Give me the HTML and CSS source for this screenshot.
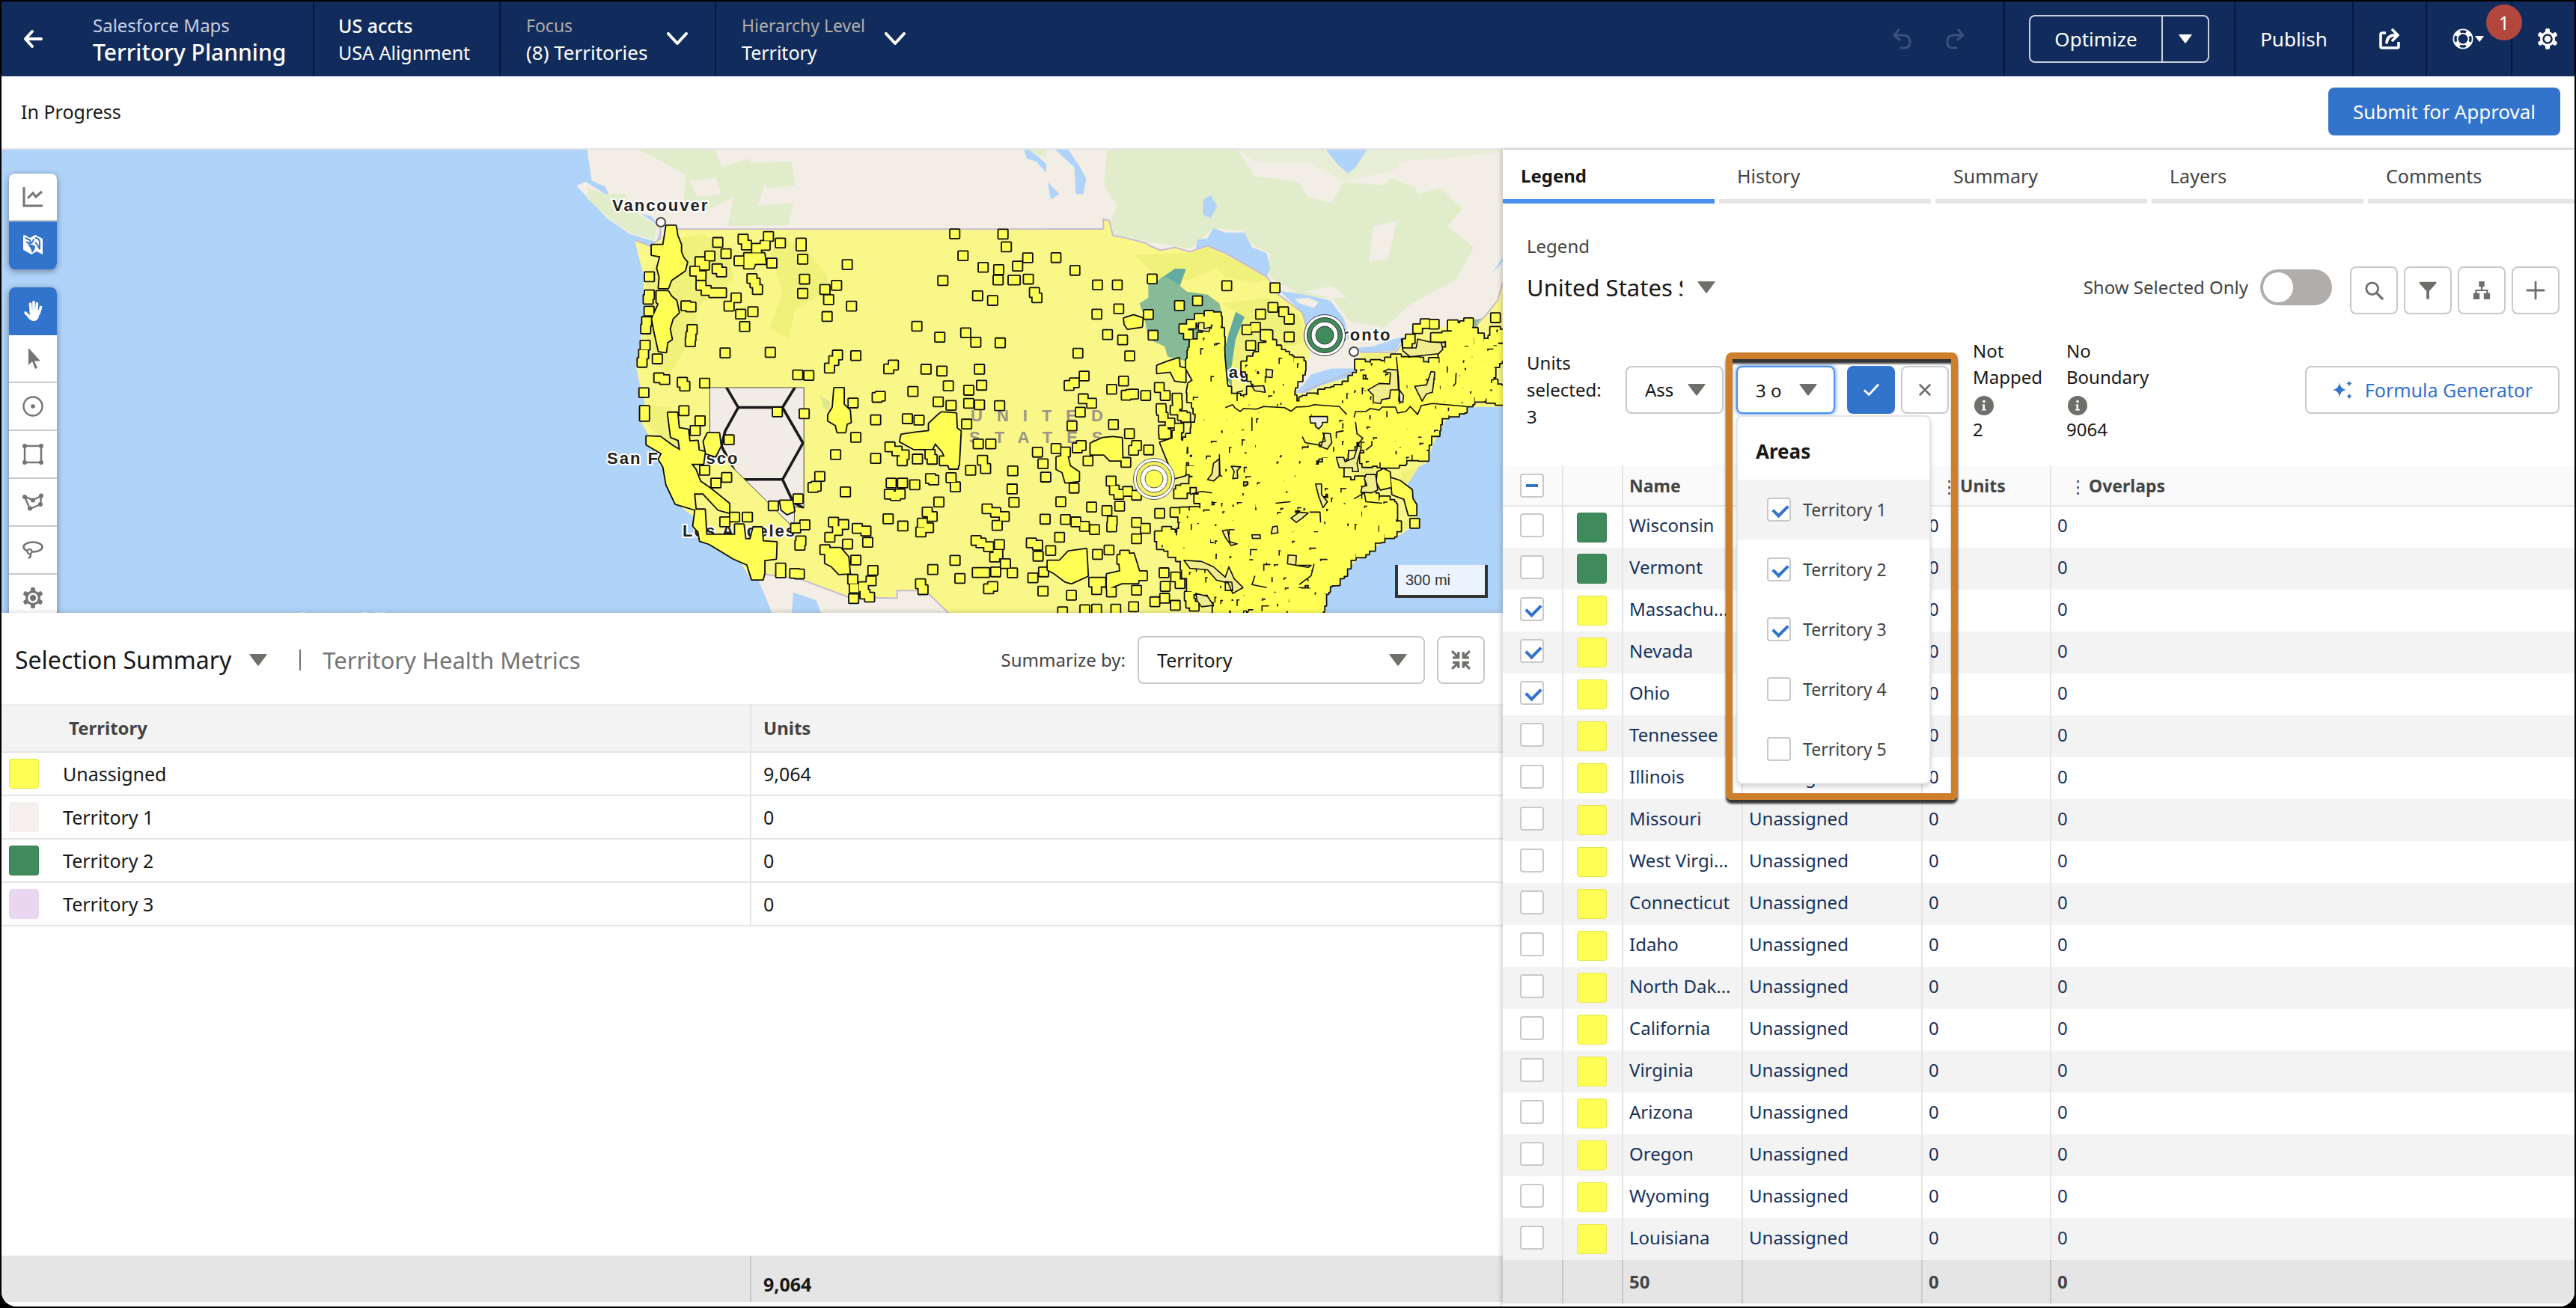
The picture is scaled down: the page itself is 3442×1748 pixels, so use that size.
FILE: index.html
```html
<!DOCTYPE html>
<html lang="en">
<head>
<meta charset="utf-8">
<title>Territory Planning</title>
<link rel="stylesheet" href="styles.css">
</head>
<body>
<svg class="sprite" aria-hidden="true">
  <symbol id="caret" viewBox="0 0 24 16"><path d="M1 0h22q1 0 .5 1L13 15q-1 1-2 0L.5 1Q0 0 1 0z" fill="currentColor"/></symbol>
  <symbol id="chevron" viewBox="0 0 28 18"><path d="M2 2l12 13L26 2" fill="none" stroke="currentColor" stroke-width="4" stroke-linecap="round" stroke-linejoin="round"/></symbol>
  <symbol id="gear" viewBox="0 0 28 28">
    <g fill="currentColor"><rect x="11" y="0" width="6" height="28" rx="2"/><rect x="11" y="0" width="6" height="28" rx="2" transform="rotate(60 14 14)"/><rect x="11" y="0" width="6" height="28" rx="2" transform="rotate(120 14 14)"/><circle cx="14" cy="14" r="10"/></g>
    <circle cx="14" cy="14" r="5.5" fill="none" stroke="var(--hole)" stroke-width="2.6"/>
  </symbol>
  <symbol id="undo" viewBox="0 0 28 28"><path d="M9 2L3 9l7 6M4 9h11q9 0 9 9t-8 8h-4" fill="none" stroke="currentColor" stroke-width="3" stroke-linecap="round" stroke-linejoin="round"/></symbol>
  <symbol id="info" viewBox="0 0 26 26"><circle cx="13" cy="13" r="13" fill="currentColor"/><circle cx="13" cy="7.5" r="1.8" fill="#fff"/><path d="M10.500 11.500h3.500v6.500h2v1.500h-6v-1.500h1.500v-5h-1z" fill="#fff"/></symbol>
</svg>
<div class="app">
  <header class="topbar">
    <button class="cell back" aria-label="Back"><svg viewBox="0 0 28 28"><path d="M13 4L4 14l9 10M4 14h21" fill="none" stroke="currentColor" stroke-width="4" stroke-linecap="round" stroke-linejoin="round"/></svg></button>
    <div class="cell brand"><span class="soft">Salesforce Maps</span><h1>Territory Planning</h1></div>
    <div class="cell align"><strong>US accts</strong><span>USA Alignment</span></div>
    <button class="cell pick focus"><span class="lines"><span class="dim">Focus</span><span>(8) Territories</span></span><svg><use href="#chevron"/></svg></button>
    <button class="cell pick level"><span class="lines"><span class="dim">Hierarchy Level</span><span>Territory</span></span><svg><use href="#chevron"/></svg></button>
    <div class="cell history"><button aria-label="Undo" disabled><svg><use href="#undo"/></svg></button><button class="redo" aria-label="Redo" disabled><svg><use href="#undo"/></svg></button></div>
    <div class="cell optimize"><button class="opt-main">Optimize</button><button class="opt-more" aria-label="More optimize actions"><svg><use href="#caret"/></svg></button></div>
    <button class="cell publish">Publish</button>
    <button class="cell share" aria-label="Share"><svg viewBox="0 0 28 28"><path d="M9 6H4q-2 0-2 2v16q0 2 2 2h20q2 0 2-2v-6" fill="none" stroke="currentColor" stroke-width="3.600"/><path d="M18 2l7 7-7 7M24 9q-13-1-14 10" fill="none" stroke="currentColor" stroke-width="3.600" stroke-linecap="round" stroke-linejoin="round"/></svg></button>
    <button class="cell help" aria-label="Help"><svg class="ring" viewBox="0 0 28 28"><circle cx="14" cy="14" r="10" fill="none" stroke="currentColor" stroke-width="7"/><circle cx="14" cy="14" r="10" fill="none" stroke="#112c5c" stroke-width="3.400" stroke-dasharray="7.900 7.800" stroke-dashoffset="4"/></svg><svg class="tiny"><use href="#caret"/></svg><span class="badge">1</span></button>
    <button class="cell settings" aria-label="Settings"><svg><use href="#gear"/></svg></button>
  </header>
  <div class="statusbar"><span>In Progress</span><button class="primary">Submit for Approval</button></div>
  <main class="work">
    <section class="left">
      <div class="map">
        <svg class="geo" viewBox="2 200 2006 619" preserveAspectRatio="xMinYMin slice" aria-label="Map of the United States">
          <g transform="translate(760 200) scale(.408 .396)">
            <path class="land" d="M60 0L75 105 120 125 130 150 200 205 270 225 300 265 300 320 265 325 218 305 225 345 245 420 245 560 235 640 220 730 235 800 248 850 240 925 270 980 320 1100 350 1190 410 1240 460 1330 560 1385 590 1440 620 1450 668 1570 730 1570 735 1495 810 1520 828 1570 1575 1570 1575 0z"/>
            <path class="land" d="M25 122L55 108 120 150 185 150 215 200 300 262 288 312 200 285 125 232z"/>
            <path class="wood" d="M60 130L120 150 185 150 210 205 290 260 280 305 200 280 130 230 60 165zM230 0H480L500 60 590 30 640 120 620 190 735 180 720 255 520 258 540 160 450 205 375 165 385 85zM590 45L730 40 740 120 650 130z"/>
            <path class="land" d="M395 105L480 95 500 150 420 160z"/>
            <path class="wood" d="M1490 0H1575V30z"/>
            <path class="water" d="M1490 0L1500 30 1530 40 1575 90V60L1545 30 1505 0zM35 0L50 60 42 25 30 0z"/>
            <path class="usa" d="M335 268H1575V1570H1250L1180 1500 1160 1488H1075V1514L915 1510 760 1450 635 1432 590 1440 560 1385 460 1330 410 1240 350 1190 320 1100 270 980 240 925 248 850 235 800 220 730 235 640 245 560 245 420 225 345 218 305 265 325 300 300z"/>
            <path class="usa-green" d="M360 300L440 285 520 340 540 440 430 520 400 640 330 760 250 700 260 560 250 420zM690 290L780 340 850 430 840 480 740 540 720 640 660 600 700 480 660 360zM250 860L330 870 380 960 470 1040 440 1060 330 1010 260 930z"/>
            <path class="usa-edge" d="M345 268H1575M218 305L265 325 300 300 300 265M635 1432L760 1450 915 1510 1075 1514V1488H1160L1180 1500 1250 1570"/>
            <clipPath id="nv"><path d="M462 803H770V1210L740 1205 738 1262 725 1265 500 1035 462 1000z"/></clipPath>
            <path d="M462 803H770V1210L740 1205 738 1262 725 1265 500 1035 462 1000z" fill="#f1ede6" stroke="#222" stroke-width="2"/>
            <path clip-path="url(#nv)" d="M515 800L555 870H700L742 800M555 870L512 950 500 1000 545 1090 570 1113H700L767 990 700 870M700 1113L735 1190 770 1210" fill="none" stroke="#1a1a1a" stroke-width="9"/>
            <path d="M822 830L855 850 855 880 835 870z" fill="#dfe68c"/>
          </g>
          <g transform="translate(1400 200) scale(.3954)">
            <path class="land" d="M-5 0H1540V870H1418L1340 920 1300 1000 1280 1060 1255 1070 1190 1170 1230 1200 1250 1260 1195 1300 1140 1320 1030 1400 940 1500V1570H-5z"/>
            <path class="wood" d="M200 0H640L700 90 850 110 880 160 960 180 1000 110 1130 120 1220 60 1250 150 1330 130 1400 200 1350 260 1440 330 1380 440 1230 520 1140 600 1020 580 960 500 870 500 750 430 750 350 690 320 660 275 560 265 480 335 400 320 330 310 220 285 215 235 235 190 190 120z"/>
            <path class="wood" d="M640 0H1540L1400 60 1200 60 1000 110 880 40 700 40z" opacity=".6"/>
            <path class="land" d="M1100 260L1180 240 1150 370 1085 380zM1190 40L1540 10V180L1400 110 1250 130 1170 100zM1390 265L1510 260 1500 310 1400 300zM870 480L960 460 1010 500 950 500z"/>
            <path class="water" d="M25 0H70L110 60 130 100 120 150H95L90 60zM0 110L40 150 10 168zM525 170L550 155 572 190 550 232 525 220zM940 0H1078L1040 60 1015 80 980 50zM1500 420L1540 360V375z"/>
            <path class="usa" d="M-5 268H188V235L208 240 220 290 270 300 330 315 380 340 430 330 480 345 540 325 600 350 680 395 740 430 780 490 860 550 880 620 885 700 850 770 830 820 940 790 1040 740 1055 685 1175 680 1250 600 1440 600 1480 560 1520 510 1537 450V870H1418L1340 920 1300 1000 1280 1060 1255 1070 1190 1170 1230 1200 1250 1260 1195 1300 1140 1320 1030 1400 940 1500V1570H-5z"/>
            <path class="usa-green" d="M290 355L480 350 540 330 690 400 740 440 700 450 600 430 570 400 480 440 380 440zM590 520L740 500 850 560 870 650 700 700 620 780 625 650 665 565zM1060 1020L1120 1000 1110 1170 1040 1180zM1195 1090L1250 1075 1190 1170zM1060 690H1180V720H1060zM1240 1200L1250 1260 1200 1280z"/>
            <path d="M375 440L430 402 467 403 447 460z" fill="#64ab9f"/>
            <path d="M340 455L400 430 447 460 470 480 540 490 580 520 590 560 500 640 470 715 405 700 395 665 340 640 325 560 310 520 340 500z" fill="#87bb98"/>
            <path d="M635 548L665 565 635 640 620 740 622 800 600 770 592 700 612 620z" fill="#64ab9f"/>
            <path d="M1440 575L1468 570 1445 605z" fill="#87bb98"/>
            <path class="water" d="M500 335L505 305 540 300 560 265 600 280 665 280 690 330 740 350 752 400 740 430 680 395 600 350 540 325zM785 478L870 490 955 510 1000 570 1020 640 900 650 880 620 860 550zM835 822L860 800 890 760 960 740 1040 740 1035 765 930 795 870 822zM1015 672L1100 665 1170 640 1205 632 1175 680 1060 685z"/>
            <path class="land" d="M835 505L880 500 915 515 900 535 850 520z"/>
            <path class="usa-edge" d="M-5 268H188V235L208 240 220 290 270 300 330 315 345 325 380 340 430 330 480 345 540 325 600 350 680 395 740 430 780 490 860 550 880 620M855 822L940 785 1035 750M1055 685H1175L1210 640M1450 590L1480 560 1520 510 1537 450"/>
          </g>
          <g class="city">
            <text x="818" y="282">Vancouver</text>
            <text x="811" y="620">San Francisco</text>
            <text x="912" y="717">Los Angeles</text>
            <text x="1586" y="505">Chicago</text>
            <text x="1764" y="455">Toronto</text>
          </g>
          <g class="country"><text x="1297" y="563">UNITED</text><text x="1295" y="592">STATES</text></g>
          <text class="sea" x="336" y="836">North Pacific</text>
          <g id="units"></g>
          <g fill="#fff" stroke="#444" stroke-width="2"><circle cx="883" cy="297" r="6"/><circle cx="1809" cy="470" r="6"/></g>
          <g stroke="#333" stroke-width="1"><circle cx="1770" cy="448" r="27.500" fill="#fff"/><circle cx="1770" cy="448" r="23.500" fill="#3f8b5c"/><circle cx="1770" cy="448" r="18" fill="#fff"/><circle cx="1770" cy="448" r="12" fill="#3f8b5c"/></g>
          <g stroke="#555" stroke-width="1"><circle cx="1542" cy="640" r="27.500" fill="#fff"/><circle cx="1542" cy="640" r="23.500" fill="#f4f060"/><circle cx="1542" cy="640" r="18" fill="#fff"/><circle cx="1542" cy="640" r="12" fill="#ffff55"/></g>
        </svg>
        <div class="tools">
          <div class="toolset">
            <button aria-label="Charts"><svg viewBox="0 0 28 28"><path d="M2 1v25h25M7 16l7-7 4 5 8-7" fill="none" stroke="currentColor" stroke-width="3"/></svg></button>
            <button class="on" aria-label="Map layers"><svg viewBox="0 0 28 28"><path d="M3 1l7 4 7-4 8 4q2 1 2 2v20l-8-4-7 4-9-5q-2-1-2-2V3q0-2 2-2z" fill="currentColor"/><path d="M4 5l6 3 1 3-3 1-3-2M15 6q0 4-4 6M17 5q5 0 6 5v10l-3-6-3-3" fill="none" stroke="#3273cc" stroke-width="2"/><path d="M7 13l6 1 4 2-1 5-3 4-2-6z" fill="#3273cc"/></svg></button>
          </div>
          <div class="toolset">
            <button class="on" aria-label="Pan"><svg viewBox="0 0 28 28"><g stroke="currentColor" stroke-linecap="round" fill="none"><path d="M10.500 5l1 12M15 2.500V15M19.500 4.500L18.500 16M24.500 9.500L22 18M4 17l6 6" stroke-width="3.600"/></g><path d="M9.500 13h14l-1.500 9q-2 6-7 6-4 0-8-5l3-1z" fill="currentColor"/></svg></button>
            <button aria-label="Select"><svg viewBox="0 0 28 28"><path d="M8 0v23l5-5 4 10 3-1.500-4-9h8z" fill="currentColor"/></svg></button>
            <button aria-label="Circle"><svg viewBox="0 0 28 28"><circle cx="14" cy="14" r="12.500" fill="none" stroke="currentColor" stroke-width="2.400"/><circle cx="14" cy="14" r="2.800" fill="currentColor"/></svg></button>
            <button aria-label="Rectangle"><svg viewBox="0 0 28 28"><rect x="3" y="3" width="22" height="22" fill="none" stroke="currentColor" stroke-width="2.400"/><g fill="currentColor"><circle cx="3" cy="3" r="3"/><circle cx="25" cy="3" r="3"/><circle cx="3" cy="25" r="3"/><circle cx="25" cy="25" r="3"/></g></svg></button>
            <button aria-label="Polygon"><svg viewBox="0 0 28 28"><path d="M3 7l11 4 11-5-1 11-14 6z" fill="none" stroke="currentColor" stroke-width="2.400"/><g fill="currentColor"><circle cx="3" cy="7" r="3"/><circle cx="25" cy="5.500" r="3"/><circle cx="14" cy="11.500" r="3"/><circle cx="24" cy="17" r="3"/><circle cx="10" cy="22.500" r="3"/></g></svg></button>
            <button aria-label="Lasso"><svg viewBox="0 0 28 28"><ellipse cx="14" cy="10" rx="12.500" ry="6.500" fill="none" stroke="currentColor" stroke-width="2.600"/><circle cx="9.500" cy="16" r="3" fill="#fff" stroke="currentColor" stroke-width="2.200"/><path d="M10 19q3 3-2 6" fill="none" stroke="currentColor" stroke-width="2.600"/></svg></button>
            <button class="cog" aria-label="Map settings"><svg><use href="#gear"/></svg></button>
          </div>
        </div>
        <div class="scale">300 mi</div>
      </div>
      <div class="summary-head">
        <button class="summary-pick">Selection Summary<svg><use href="#caret"/></svg></button>
        <span class="bar"></span>
        <span class="metrics">Territory Health Metrics</span>
        <label for="sumby">Summarize by:</label>
        <span class="select wide"><select id="sumby"><option>Territory</option></select><svg><use href="#caret"/></svg></span>
        <button class="icon-btn" aria-label="Contract"><svg viewBox="0 0 24 24"><path d="M1 1l7 7M2 9h7V2M23 1l-7 7M22 9h-7V2M1 23l7-7M2 15h7v7M23 23l-7-7M22 15h-7v7" fill="none" stroke="currentColor" stroke-width="3"/></svg></button>
      </div>
      <table class="summary">
        <thead><tr><th>Territory</th><th>Units</th></tr></thead>
        <tbody>
          <tr><td><span class="cellflex"><i class="swatch"></i>Unassigned</span></td><td>9,064</td></tr>
          <tr><td><span class="cellflex"><i class="swatch s1"></i>Territory 1</span></td><td>0</td></tr>
          <tr><td><span class="cellflex"><i class="swatch green"></i>Territory 2</span></td><td>0</td></tr>
          <tr><td><span class="cellflex"><i class="swatch s3"></i>Territory 3</span></td><td>0</td></tr>
        </tbody>
      </table>
      <div class="totals"><span></span><strong>9,064</strong></div>
    </section>
    <aside class="right">
      <nav class="tabs"><a class="active" href="#legend">Legend</a><a href="#history">History</a><a href="#summary">Summary</a><a href="#layers">Layers</a><a href="#comments">Comments</a></nav>
      <div class="legend-label">Legend</div>
      <div class="legend-row">
        <button class="legend-pick"><span>United States States</span><svg><use href="#caret"/></svg></button>
        <label class="switch">Show Selected Only<input type="checkbox"></label>
        <button class="icon-btn" aria-label="Search"><svg viewBox="0 0 28 28"><circle cx="11.500" cy="11.500" r="8.500" fill="none" stroke="currentColor" stroke-width="3"/><path d="M18 18l8 8" stroke="currentColor" stroke-width="3.400" stroke-linecap="round"/></svg></button>
        <button class="icon-btn" aria-label="Filter"><svg viewBox="0 0 28 28"><path d="M2 2h24q1 1 0 2L16 15v10q0 2-2 2t-2-2V15L2 4Q1 3 2 2z" fill="currentColor"/></svg></button>
        <button class="icon-btn" aria-label="Hierarchy"><svg viewBox="0 0 28 28"><path d="M14 7v6M6 19v-5h16v5" fill="none" stroke="currentColor" stroke-width="2.400"/><path d="M10 1h8v8h-8zM2 18h9v9H2zM17 18h9v9h-9z" fill="currentColor"/></svg></button>
        <button class="icon-btn" aria-label="Add"><svg viewBox="0 0 28 28"><path d="M14 2v24M2 14h24" stroke="currentColor" stroke-width="3" stroke-linecap="round"/></svg></button>
      </div>
      <div class="assign-row">
        <div class="units-selected">Units<br>selected:<br>3</div>
        <span class="select act"><select aria-label="Action"><option>Ass</option></select><svg><use href="#caret"/></svg></span>
        <div class="multi">
          <span class="select pickarea"><input type="text" aria-label="Areas" value="3 o" readonly><svg><use href="#caret"/></svg></span>
          <button class="icon-btn ok" aria-label="Apply"><svg viewBox="0 0 28 28"><path d="M5 15l6 6L24 7" fill="none" stroke="currentColor" stroke-width="3" stroke-linecap="round" stroke-linejoin="round"/></svg></button>
          <button class="icon-btn" aria-label="Cancel"><svg viewBox="0 0 28 28"><path d="M7 7l14 14M21 7L7 21" stroke="currentColor" stroke-width="2.800" stroke-linecap="round"/></svg></button>
          <div class="menu">
            <h2>Areas</h2>
            <label class="hot"><input type="checkbox" checked>Territory 1</label>
            <label><input type="checkbox" checked>Territory 2</label>
            <label><input type="checkbox" checked>Territory 3</label>
            <label><input type="checkbox">Territory 4</label>
            <label><input type="checkbox">Territory 5</label>
          </div>
          <div class="callout"></div>
        </div>
        <div class="count nm">Not<br>Mapped<br><svg><use href="#info"/></svg><br>2</div>
        <div class="count">No<br>Boundary<br><svg><use href="#info"/></svg><br>9064</div>
        <button class="formula"><svg viewBox="0 0 28 28"><path d="M10 4q1 9 9 10-8 1-9 10-1-9-9-10 8-1 9-10zM23 1q.5 4 4 4.500Q23.500 6 23 10q-.5-4-4-4.500Q22.500 5 23 1zM23 18q.5 4 4 4.500-3.500.5-4 4.500-.5-4-4-4.500 3.500-.5 4-4.500z" fill="currentColor"/></svg>Formula Generator</button>
      </div>
      <table class="units">
        <colgroup><col class="c1"><col class="c1"><col class="c2"><col class="c3"><col class="c4"><col></colgroup>
        <thead><tr><th><input type="checkbox" class="some" aria-label="Select all"></th><th></th><th>Name</th><th></th><th class="drag">Units</th><th class="drag">Overlaps</th></tr></thead>
        <tbody id="rows"></tbody>
        <tfoot><tr><td></td><td></td><td>50</td><td></td><td>0</td><td>0</td></tr></tfoot>
      </table>
    </aside>
  </main>
</div>
<script src="app.js"></script>
</body>
</html>
```
FILE: styles.css
```css
* { box-sizing: border-box; }
body { margin: 0; background: #000; color: #181818; font: 24px/36px "Noto Sans", "Open Sans", sans-serif; }
button, input, select { font: inherit; color: inherit; }
button { background: none; border: 0; padding: 0; cursor: pointer; }
h1, h2 { margin: 0; }
svg { display: block; flex: none; }
.sprite { position: absolute; width: 0; height: 0; }
.app { display: flex; flex-direction: column; min-height: calc(100vh - 4px); margin: 2px; background: #fff; border-radius: 0 0 20px 20px; overflow: hidden; }

.topbar { display: flex; height: 100px; background: #112c5c; color: #fff; font-size: 25px; --hole: #112c5c; }
.cell { display: flex; align-items: center; border-right: 2px solid #061840; }
.topbar svg { width: 28px; height: 28px; }
.back { padding: 0 28px; width: 122px; border: 0; }
.brand, .align { flex-direction: column; align-items: flex-start; justify-content: center; }
.brand { width: 296px; }
.brand h1 { font-size: 30px; line-height: 36px; font-weight: 500; }
.soft { color: #c5d0e2; font-size: 24px; }
.align { width: 249px; padding-left: 32px; }
.align strong { font-weight: 500; }
.pick { text-align: left; padding-left: 34px; gap: 26px; }
.lines { display: flex; flex-direction: column; }
.dim { color: #b0adab; font-size: 23px; }
.focus { width: 288px; font-size: 26px; }
.level { border: 0; }
.topbar .pick svg { height: 18px; }
.history { margin-left: auto; gap: 42px; padding-right: 51px; }
.history button { color: #3a5079; }
.redo { transform: scaleX(-1); }
.optimize { width: 308px; padding-left: 32px; font-size: 26px; }
.opt-main, .opt-more { height: 64px; border: 2px solid #c9cfda; }
.opt-main { width: 179px; border-radius: 8px 0 0 8px; }
.opt-more { width: 64px; margin-left: -2px; border-radius: 0 8px 8px 0; display: grid; place-items: center; }
.topbar .opt-more svg { width: 20px; height: 12px; }
.publish { width: 158px; justify-content: center; font-size: 26px; }
.share { width: 98px; justify-content: center; }
.help { position: relative; width: 114px; padding-left: 34px; gap: 2px; }
.topbar .tiny { width: 12px; height: 8px; }
.badge { position: absolute; left: 79px; top: 4px; width: 48px; height: 48px; border-radius: 50%; background: #b3473d; line-height: 48px; text-align: center; z-index: 1; }
.settings { border: 0; padding: 0 22px 0 33px; }

.statusbar { display: flex; align-items: center; justify-content: space-between; height: 98px; padding: 0 19px 2px 26px; border-bottom: 2px solid #e5e5e5; font-size: 25px; }
.primary { width: 310px; height: 64px; border-radius: 8px; background: #3273cc; color: #fff; font-size: 26px; }

.work { flex: 1; display: grid; grid-template-columns: minmax(0, 2006fr) minmax(0, 1432fr); }
.left { display: flex; flex-direction: column; }
.map { position: relative; height: 619px; background: #b0d3f9; overflow: hidden; }
.geo { width: 100%; height: 100%; }
.land { fill: #f2eee5; }
.wood { fill: #e1ecca; }
.water { fill: #b0d3f9; }
.usa { fill: #f9f788; }
.usa-green { fill: #e6ec6e; opacity: .5; }
.usa-edge { fill: none; stroke: #c7bad2; stroke-width: 5; }
.city text, .country text, .sea { font-family: "Liberation Sans", Arial, sans-serif; font-size: 22px; font-weight: 700; }
.city text { fill: #222; letter-spacing: 2px; paint-order: stroke; stroke: #fff; stroke-width: 4px; }
.country text { fill: #9c9488; letter-spacing: 19px; }
.sea { fill: #4a5f7c; letter-spacing: 5px; paint-order: stroke; stroke: #dcebfb; stroke-width: 4px; }
.u-line { fill: none; stroke: #0c0c0c; stroke-width: 9; stroke-linejoin: round; }
.u-fill { fill: #ffff55; }
.u-speck { fill: #111; }
.u-hole { fill: #f1ec8c; stroke: #0c0c0c; stroke-width: 4; stroke-linejoin: round; }
.u-bare { fill: #eeeae0; stroke: #0c0c0c; stroke-width: 4; stroke-linejoin: round; }
.u-seam { fill: none; stroke: #0c0c0c; stroke-width: 4; stroke-linejoin: round; }
.tools { position: absolute; left: 10px; top: 32px; display: flex; flex-direction: column; gap: 24px; }
.toolset { width: 64px; border-radius: 8px; background: #fff; overflow: hidden; box-shadow: 0 2px 8px rgba(0, 0, 0, .4); color: #747474; }
.toolset button { width: 64px; height: 64px; display: grid; place-items: center; border-bottom: 2px solid #c9c9c9; }
.toolset svg { width: 28px; height: 28px; --hole: #fff; }
.toolset .on { background: #3273cc; color: #fff; border-color: #3273cc; }
.scale { position: absolute; right: 20px; bottom: 20px; width: 124px; height: 44px; border: 4px solid #333; border-top: 0; background: rgba(255, 255, 255, .75); padding-left: 10px; font: 20px/40px "Liberation Sans", Arial, sans-serif; color: #333; }

.summary-head { display: flex; align-items: center; height: 122px; padding: 4px 24px 0 18px; box-shadow: 0 -2px 6px rgba(0, 0, 0, .12); z-index: 1; background: #fff; }
.summary-pick { display: flex; align-items: center; gap: 24px; font-size: 32px; }
.summary-pick svg, .select svg, .legend-pick svg { width: 24px; height: 16px; color: #706e6b; }
.bar { width: 2px; height: 28px; margin: 0 29px 0 43px; background: #747474; }
.metrics { font-size: 31px; color: #747474; }
.summary-head label { margin: 0 16px 0 auto; color: #444; }
.select { position: relative; display: flex; align-items: center; height: 64px; border: 2px solid #c9c9c9; border-radius: 8px; background: #fff; }
.select select, .select input { appearance: none; border: 0; background: none; outline: 0; width: 100%; height: 100%; padding: 0 0 0 24px; }
.select svg { position: absolute; right: 22px; pointer-events: none; }
.wide { width: 384px; margin-right: 16px; font-size: 25px; }
.icon-btn { width: 64px; height: 64px; border: 2px solid #c9c9c9; border-radius: 8px; background: #fff; color: #706e6b; display: grid; place-items: center; flex: none; }
.icon-btn svg { width: 26px; height: 26px; }

table { border-collapse: collapse; width: 100%; table-layout: fixed; }
th, td { padding: 0; text-align: left; }
th { color: #444; }
.summary th { height: 64px; background: #f3f3f3; }
.summary th, .summary td { border-bottom: 2px solid #e5e5e5; padding-left: 16px; }
.summary tr > :first-child { width: calc(50% - 2px); border-right: 2px solid #e5e5e5; padding-left: 10px; }
.summary tr > th:first-child { width: 49.9%; padding-left: 90px; }
.summary td { height: 58px; font-size: 25px; }
.cellflex { display: flex; align-items: center; gap: 32px; }
.swatch { display: block; width: 40px; height: 40px; border-radius: 4px; background: #ffff55; box-shadow: inset 0 0 0 1px rgba(0, 0, 0, .1); }
.green { background: #3f8b5c; }
.s1 { background: #f5f0ed; box-shadow: none; }
.s3 { background: #e8d7ee; box-shadow: none; }
.totals { display: flex; height: 62px; margin: auto 0 6px; background: #e5e5e5; font-size: 25px; }
.totals span { width: calc(50% - 1px); border-right: 2px solid #c9c9c9; }
.totals strong { padding: 20px 0 0 16px; }

.right { box-shadow: -2px 0 6px rgba(0, 0, 0, .2); z-index: 2; background: #fff; overflow: hidden; }
.tabs { display: grid; grid-template-columns: repeat(5, 1fr); gap: 6px; margin-right: -7px; }
.tabs a { height: 72px; padding-left: 24px; line-height: 70px; border-bottom: 6px solid #e5e5e5; color: #444; text-decoration: none; font-size: 25px; }
.tabs .active { border-color: #4a90ec; color: #181818; font-weight: 700; font-size: 24px; }
.legend-label { padding: 39px 0 1px 32px; color: #444; }
.legend-row { display: flex; align-items: center; gap: 8px; height: 80px; padding: 0 20px 0 32px; }
.legend-pick { display: flex; align-items: center; gap: 20px; font-size: 31px; margin-right: auto; padding-bottom: 8px; }
.legend-pick span { width: 208px; overflow: hidden; white-space: nowrap; text-align: left; }
.switch { display: flex; align-items: center; gap: 16px; color: #444; margin-right: 16px; padding-bottom: 8px; }
.switch input { appearance: none; margin: 0; width: 96px; height: 48px; border-radius: 24px; background: #b0adab; display: flex; align-items: center; padding-left: 4px; }
.switch input::before { content: ""; width: 40px; height: 40px; border-radius: 50%; background: #fff; }
.assign-row { display: flex; align-items: center; height: 194px; padding: 0 20px 8px 32px; }
.units-selected { width: 132px; }
.act { width: 131px; margin-right: 17px; }
.multi { position: relative; display: flex; gap: 8px; margin-right: 32px; z-index: 3; }
.pickarea { width: 132px; margin-right: 8px; border-color: #4a90ec; box-shadow: 0 0 6px #4a90ec; }
.ok { background: #3273cc; border-color: #3273cc; color: #fff; }
.menu { position: absolute; left: 0; top: 66px; width: 260px; height: 493px; padding-top: 28px; background: #fff; border: 2px solid #e5e5e5; border-radius: 8px; box-shadow: 0 4px 6px rgba(0, 0, 0, .16); font-size: 23px; }
.menu h2 { font-size: 26px; line-height: 36px; padding: 0 0 20px 24px; }
.menu label { display: flex; align-items: center; gap: 16px; height: 80px; padding-left: 39px; color: #444; }
.menu .hot { background: #f3f3f3; }
.callout { position: absolute; left: -14px; top: -18px; width: 310px; height: 598px; border: 9px solid #cd7f2e; border-radius: 8px; box-shadow: 0 5px 3px #333, inset 0 7px 3px -1px #333; pointer-events: none; }
.count { line-height: 35px; }
.count svg { display: inline-block; width: 26px; height: 26px; margin-left: 2px; color: #706e6b; vertical-align: middle; }
.nm { width: 125px; }
.formula { display: flex; align-items: center; justify-content: center; gap: 16px; width: 340px; height: 64px; margin-left: auto; border: 2px solid #c9c9c9; border-radius: 8px; color: #3273cc; font-size: 25px; }
.formula svg { width: 28px; height: 28px; }

.menu input, .units input { appearance: none; margin: 0; flex: none; display: block; position: relative; width: 32px; height: 32px; border: 2px solid #c9c9c9; border-radius: 4px; background: #fff; }
.menu input:checked::after, .units input:checked::after { content: ""; position: absolute; left: 6px; top: 7px; width: 16px; height: 9px; border: solid #3273cc; border-width: 0 0 4px 4px; transform: rotate(-45deg); }
.units .some::after { content: ""; position: absolute; left: 6px; top: 12px; width: 16px; height: 4px; background: #3273cc; }
.units .c1 { width: 80px; }
.units .c2 { width: 160px; }
.units .c3 { width: 240px; }
.units .c4 { width: 172px; }
.units th { height: 54px; background: #fafafa; border-bottom: 2px solid #e5e5e5; font-size: 23px; }
.units th, .units td { border-right: 2px solid #e5e5e5; padding-left: 8px; }
.units tr > :last-child { border-right: 0; }
.units tr > :first-child { padding-left: 23px; }
.units tr > :nth-child(2) { padding-left: 18px; }
.units tbody td { height: 56px; color: #16325c; padding-bottom: 5px; }
.units tbody td:nth-child(2) { padding-bottom: 0; }
.units tbody tr:nth-child(even) { background: #f3f3f3; }
.units th.drag { padding-left: 24px; }
.units th.drag::before { content: "⋮"; display: inline-block; width: 26px; font-weight: 400; }
.units tfoot td { height: 58px; background: #e5e5e5; border-color: #c9c9c9; color: #444; font-weight: 700; }
```
FILE: app.js
```js
// Legend table rows
const names = ["Wisconsin", "Vermont", "Massachu...", "Nevada", "Ohio", "Tennessee", "Illinois", "Missouri", "West Virgi...", "Connecticut", "Idaho", "North Dak...", "California", "Virginia", "Arizona", "Oregon", "Wyoming", "Louisiana"];
document.getElementById("rows").innerHTML = names.map((n, i) =>
  `<tr><td><input type="checkbox" aria-label="${n}"${i > 1 && i < 5 ? " checked" : ""}></td><td><i class="swatch${i < 2 ? " green" : ""}"></i></td><td>${n}</td><td>Unassigned</td><td>0</td><td>0</td></tr>`).join("");

// Map units: small squares plus merged metro areas, drawn as outlines first and fills on top
const west = "488,313 654,293 693,315 462,359 515,351 571,302 582,322 643,323 615,333 761,315 761,325 766,370 558,375 665,383 772,437 766,485 912,388 877,458 839,472 851,506 926,528 846,563 430,378 444,390 413,410 433,425 486,402 500,413 600,435 618,472 610,450 433,458 450,475 475,483 500,483 548,500 525,528 563,555 603,547 576,597 264,429 264,490 260,505 263,545 255,580 252,605 250,660 245,690 240,718 290,706 384,527 400,531 404,607 398,648 400,630 512,686 660,684 295,770 314,776 372,785 380,798 445,788 246,820 248,880 248,900 377,881 430,915 414,948 377,960 750,760 786,762 880,693 868,712 854,737 940,695 1140,596 1215,633 1300,618 1333,650 1413,652 1063,727 1048,740 1170,741 1222,747 1345,741 1243,797 1310,812 1352,795 1127,816 1020,832 1010,836 931,855 1210,851 1252,863 1310,856 1345,861 1411,864 683,885 771,891 525,979 1005,912 1109,908 1147,913 1303,926 940,971 1341,993 1382,993 874,1029 1005,1042 1142,1044 1183,1028 1190,1045 1230,1050 1260,1062 1052,1003 1075,1017 1098,1030 1092,1050 1355,1048 1316,1082 1365,1076 1454,1084 822,1103 800,1140 810,1136 906,1155 517,1106 445,1082 482,1125 1056,1125 1093,1125 1133,1131 1050,1163 1070,1168 1085,1162 1185,1110 1195,1115 1252,1107 1266,1138 1452,1145 1212,1189 1458,1190 1370,1212 1398,1224 1426,1238 1403,1268 1174,1223 1190,1238 1158,1260 1178,1276 1153,1290 1046,1246 1094,1270 585,1240 543,1240 511,1256 670,1202 751,1178 773,1266 743,1277 760,1320 757,1335 867,1257 900,1265 880,1285 855,1308 945,1278 973,1287 979,1325 913,1331 839,1350 940,1385 996,1420 1265,1386 1192,1417 1281,1447 1334,1319 1350,1327 1375,1340 1410,1333 1405,1365 1395,1375 1430,1397 1338,1427 1362,1427 1398,1425 1453,1428 1375,1482 1388,1474 1152,1465 1160,1485 1515,1327 1535,1335 1537,1372 1520,1445 1553,1490 1555,1425 694,1412 694,1428 740,1430 755,1432 933,1515 930,1450 935,1480 990,1455 965,1475 970,1500 985,1510 1264,284 1422,285 1433,328 1291,358 1503,365 1357,397 1408,405 1470,393 1225,442 1406,440 1455,440 1462,440 1505,437 1339,493 1388,509 1525,482 1533,500 1562,1105 1560,1247 1535,1021 1553,1060";
const westBlobs = [
  "320,257 350,257 355,290 367,320 367,345 375,365 387,380 380,408 335,440 325,467 295,467 298,430 290,400 300,360 272,355 272,322 310,322",
  "288,478 325,478 335,495 352,510 360,550 340,570 330,605 337,640 322,650 318,683 295,680 280,610 273,570 295,520 288,515",
  "575,350 640,350 645,385 610,385 605,400 575,400",
  "870,805 900,805 900,860 920,880 923,920 910,925 905,953 880,953 875,930 850,915 850,895 865,870",
  "1220,887 1268,890 1270,940 1283,950 1277,1065 1245,1070 1225,1020 1200,990 1190,1010 1130,1010 1085,985 1090,962 1135,955 1180,950 1180,925 1205,900",
  "325,888 355,888 360,940 390,945 395,985 422,983 425,1015 445,1020 440,1060 400,1060 415,1080 430,1120 465,1145 495,1170 525,1195 525,1225 490,1215 440,1160 410,1160 415,1215 350,1195 320,1130 310,1070 295,1045 305,1025 255,995 255,968 300,970 340,1000 365,1015 360,980 335,970",
  "455,957 492,957 497,1000 480,1035 450,1025 442,985",
  "415,1215 445,1215 450,1300 545,1300 545,1265 572,1265 578,1315 595,1315 605,1275 632,1275 635,1322 680,1325 678,1380 640,1385 640,1430 635,1450 600,1450 585,1400 540,1380 500,1355 460,1330 430,1320 425,1290 408,1270",
  "850,1345 890,1345 915,1375 920,1430 885,1432 860,1405 840,1395 840,1350",
  "692,1185 732,1185 738,1220 715,1230 697,1215"];
const east = "28,365 92,408 168,457 235,457 353,437 605,460 768,467 445,527 506,511 761,533 719,556 797,548 816,573 240,538 340,557 166,556 202,625 253,643 356,627 102,688 277,697 816,633 686,662 673,609 702,600 123,765 90,788 72,797 256,782 216,810 290,826 265,830 280,827 331,831 377,804 397,831 383,875 120,842 148,857 110,887 82,934 222,929 276,960 391,948 392,962 443,941 466,905 560,935 594,935 28,1010 60,1022 113,1000 100,1008 300,1000 290,1016 160,1010 175,1015 264,1057 341,1015 136,1052 466,1042 89,1144 214,1120 225,1150 240,1165 270,1155 300,1168 243,1205 44,1190 148,1208 200,1220 378,1229 430,1226 442,1163 455,1163 60,1250 95,1258 124,1273 158,1284 218,1255 216,1275 40,1310 10,1355 168,1368 207,1353 155,1462 180,1462 165,1487 80,1506 320,1440 300,1489 215,1495 290,1545 230,1553 125,1555 165,1553 260,1370 250,1385 50,1562 465,1277 1240,1263 1513,568 1422,585 1306,590 1275,588 1250,605 1225,640 1215,655 1310,635 1325,635 460,605 475,625 485,590 512,570 545,560 570,565 437,840 430,880 402,1290 300,1315 300,1260 330,1280";
const eastBlobs = [
  "145,993 185,975 220,972 250,975 252,1050 210,1050 190,1030 145,1030",
  "258,570 290,560 320,570 318,598 270,605 260,590",
  "30,1040 65,1030 75,1070 105,1090 105,1120 60,1125 50,1090 30,1080",
  "70,1358 130,1350 135,1440 80,1465 60,1460 20,1430 0,1420 0,1390 40,1390",
  "240,1370 290,1365 310,1430 305,1465 250,1465 200,1485 200,1435 245,1425",
  "380,990 440,970 470,1000 465,1100 430,1110 400,1040",
  "1115,1090 1135,1080 1155,1090 1160,1140 1125,1148 1112,1125",
  "1160,1110 1190,1120 1230,1150 1232,1180 1245,1200 1245,1235 1220,1235 1205,1180 1165,1165",
  "370,730 410,715 443,705 445,735 465,740 465,785 430,780 415,750 370,755",
  "500,645 595,640 597,700 605,790 612,815 580,840 470,820 475,790 490,780 468,740 468,710 495,680"];
const dense = "520,570 590,565 580,640 600,640 620,565 600,640 580,700 590,790 620,835 700,800 660,740 670,700 720,690 720,640 750,610 765,640 780,690 820,700 865,725 860,760 835,780 815,835 870,845 960,815 1025,790 1050,725 1160,715 1200,700 1215,720 1330,710 1355,590 1440,600 1450,630 1480,665 1515,600 1540,600 1540,690 1500,740 1505,780 1540,800 1540,855 1490,840 1410,860 1400,880 1325,905 1310,965 1285,1000 1265,1050 1070,1070 1070,1010 1040,970 1020,1000 990,1060 980,1110 1060,1110 1060,1150 1110,1170 1180,1200 1180,1295 1130,1305 1070,1355 1015,1390 1010,1430 925,1490 925,1570 570,1570 550,1510 490,1500 460,1380 390,1360 370,1300 440,1300 470,1230 520,1200 520,1160 490,1130 505,1060 480,990 510,880 480,830 530,790 480,700 490,660 520,640";
const fringe = "385,830 560,830 590,1560 340,1560 380,1380 445,1290 420,1110 380,1000";
// Gaps inside the dense area where the base map shows through
const holes = [
  "975,1040 1000,1040 1005,1055 1035,1042 1048,1000 1060,1005 1045,1060 1050,1088 1030,1088 1030,1075 985,1075",
  "1070,1112 1075,1098 1108,1098 1115,1150 1095,1160 1058,1158 1062,1140 1078,1135",
  "1150,742 1182,745 1185,812 1158,812 1155,840 1128,845 1125,858 1100,855 1100,830 1082,812 1120,790 1155,792 1158,755 1135,750",
  "1195,640 1200,670 1245,670 1250,640 1290,650 1330,652 1335,675 1320,690 1225,700 1200,680",
  "930,958 955,960 960,990 945,1012 918,1002 918,990 938,985",
  "1240,800 1280,795 1295,750 1308,752 1300,820 1280,825 1265,850 1255,830",
  "510,585 528,585 528,605 550,600 545,615 508,610",
  "738,742 760,745 758,770 738,768", "690,800 730,798 735,820 700,815",
  "560,1060 580,1045 582,1100 560,1120 540,1115 555,1095",
  "620,1070 652,1072 640,1085 642,1110 625,1112 630,1088",
  "460,1388 520,1392 560,1410 600,1445 612,1410 630,1450 660,1480 625,1500 610,1465 570,1455 540,1420 480,1415",
  "590,1288 608,1285 615,1325 640,1332 620,1338 600,1310",
  "822,1245 850,1225 880,1228 860,1245 840,1260", "905,1130 925,1130 925,1165 945,1190 930,1210 915,1170",
  "812,1370 840,1372 838,1405 890,1405 880,1412 810,1400", "690,1302 718,1302 718,1314 692,1314",
  "760,1275 775,1272 778,1295 755,1298", "500,1500 540,1510 560,1540 520,1545 505,1525", "600,1460 622,1462 625,1490 600,1490"];
const seams = [
  "600,872 625,862 632,872 650,885 662,875 705,877 730,868 765,870 800,872 822,884 840,870 880,868 900,862 940,865 985,868 1010,895",
  "1035,905 1040,885 1075,885 1090,875 1120,880 1130,870 1175,870 1182,890 1210,885 1225,868 1250,895 1262,865 1300,858 1345,862 1415,868",
  "580,1030 580,1100 590,1105", "690,905 690,950", "1178,700 1185,770 1190,860", "1380,755 1378,790 1370,800",
  "860,970 870,990 925,1000 935,960", "1040,920 1045,960 1065,975 1045,1000", "770,1195 820,1190", "885,1225 920,1225 922,1260",
  "1000,950 975,955 975,975", "1035,1180 1070,1160 1075,1190 1130,1195", "700,1440 690,1470 740,1480", "900,1400 890,1440 850,1470",
  "1075,1015 1095,1000 1095,985", "480,1165 520,1155 555,1160", "640,850 640,820 660,815"];
const pts = s => s.split(" ").map(p => p.split(",").map(Number));
let seed = 7;
const rnd = () => (seed = (seed * 16807) % 2147483647) / 2147483647;
const inside = (x, y, poly) => {
  let r = false;
  for (let i = 0, j = poly.length - 1; i < poly.length; j = i++) {
    const [a, b] = poly[i], [c, d] = poly[j];
    if ((b > y) !== (d > y) && x < (c - a) * (y - b) / (d - b) + a) r = !r;
  }
  return r;
};
const sq = ([x, y], k = 14) => `M${Math.round(x - k)} ${Math.round(y - k)}h${2 * k}v${2 * k}h${-2 * k}z`;
const scatter = (p, step, keep) => {
  const out = [];
  for (let y = 540; y < 1570; y += step) for (let x = 330; x < 1540; x += step) {
    const a = x + (rnd() - .5) * step, b = y + (rnd() - .5) * step;
    if (rnd() < keep && inside(a, b, p)) out.push([a, b]);
  }
  return out;
};
const lines = (list, end) => list.map(s => "M" + pts(s).map(p => p.join(" ")).join("L") + end).join("");
const densePoly = pts(dense);
const specks = scatter(densePoly, 36, .26).map(([x, y]) => {
  const w = 4 + rnd() * rnd() * 26, h = rnd() < .5 ? 4 : 5 + rnd() * 14;
  return `M${x.toFixed(0)} ${y.toFixed(0)}h${w.toFixed(0)}v4h${(4 - w).toFixed(0)}v${h.toFixed(0)}h-4z`;
}).join("");
const westShape = pts(west).map(p => sq(p)).join("") + lines(westBlobs, "z");
const eastShape = pts(east).map(p => sq(p)).join("") + lines(eastBlobs, "z") +
  scatter(pts(fringe), 36, .62).map(p => sq(p)).join("") +
  scatter(densePoly, 19, .97).map(p => sq(p, 16)).join("");
const layer = (t, d, extra = "") =>
  `<g transform="${t}"><path class="u-line" d="${d}"/><path class="u-fill" d="${d}"/>${extra}</g>`;
const details = `<path class="u-speck" d="${specks}"/><path class="u-hole" d="${lines(holes, "z")}"/><path class="u-bare" d="M885 902H945V922H928V930L916 944 905 936V924H888z"/><path class="u-bare" d="M1188 812L1202 830 1200 855 1186 850z"/><path class="u-seam" d="${lines(seams, "")}"/>`;
document.getElementById("units").innerHTML =
  layer("translate(760 200) scale(.408 .396)", westShape) +
  layer("translate(1400 200) scale(.3954)", eastShape, details);
```
